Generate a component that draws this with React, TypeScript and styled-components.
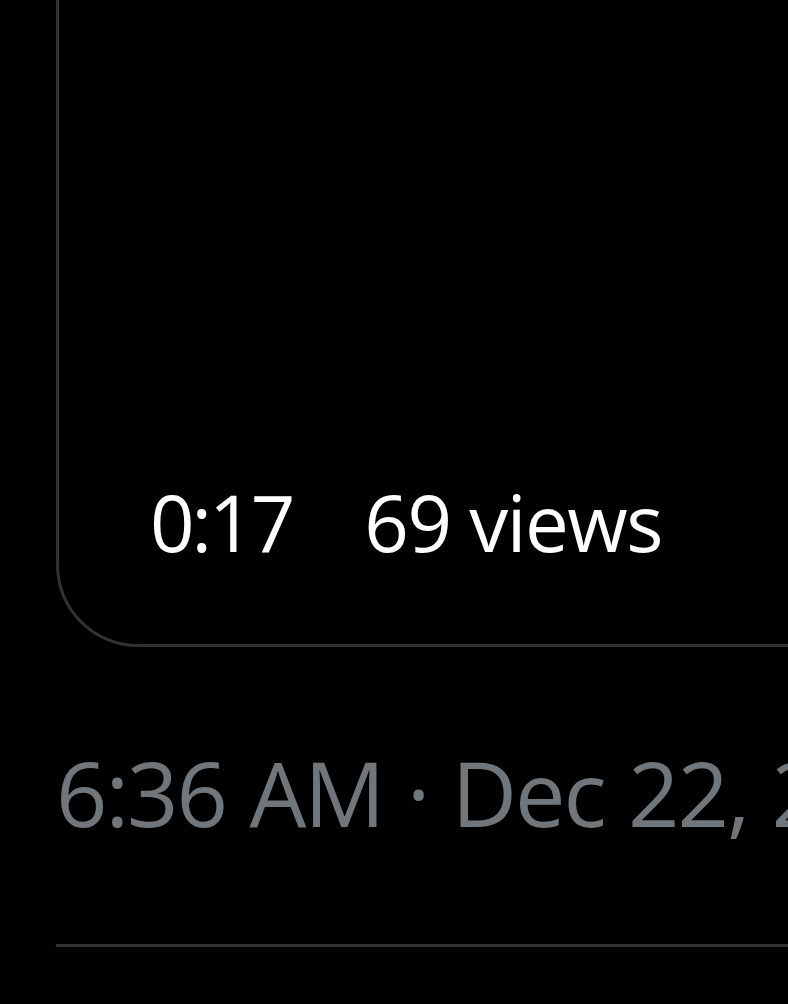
import React from "react";
import styled, { createGlobalStyle } from "styled-components";

const Global = createGlobalStyle`
  html, body { margin: 0; padding: 0; background: #000; }
  body { overflow: hidden; font-family: "Open Sans", "Noto Sans", sans-serif; }
`;

const Page = styled.div`
  width: 788px;
  height: 1004px;
  background: #000;
  padding-left: 56px;
  box-sizing: border-box;
  overflow: hidden;
  display: flex;
  flex-direction: column;
`;

const VideoCard = styled.div`
  width: 800px;
  height: 647px;
  flex-shrink: 0;
  box-sizing: border-box;
  border: 3px solid #2f3336;
  border-top: none;
  border-bottom-left-radius: 82px;
  display: flex;
  align-items: flex-end;
  padding: 0 0 83px 91px;
  gap: 72px;
`;

const Overlay = styled.span<{ $spacing: number }>`
  color: #ffffff;
  font-size: 78px;
  line-height: 78px;
  letter-spacing: ${(p) => p.$spacing}px;
  white-space: nowrap;
`;

const Timestamp = styled.div`
  margin-top: 100px;
  color: #71767b;
  font-size: 90px;
  line-height: 90px;
  letter-spacing: -2px;
  word-spacing: 2px;
  white-space: nowrap;
`;

const Divider = styled.div`
  margin-top: 107px;
  width: 800px;
  height: 3px;
  background: #2f3336;
  flex-shrink: 0;
`;

export default function App() {
  return (
    <>
      <Global />
      <Page>
        <VideoCard>
          <Overlay $spacing={-3}>0:17</Overlay>
          <Overlay $spacing={-1.5}>69 views</Overlay>
        </VideoCard>
        <Timestamp>6:36 AM · Dec 22, 2023</Timestamp>
        <Divider />
      </Page>
    </>
  );
}
